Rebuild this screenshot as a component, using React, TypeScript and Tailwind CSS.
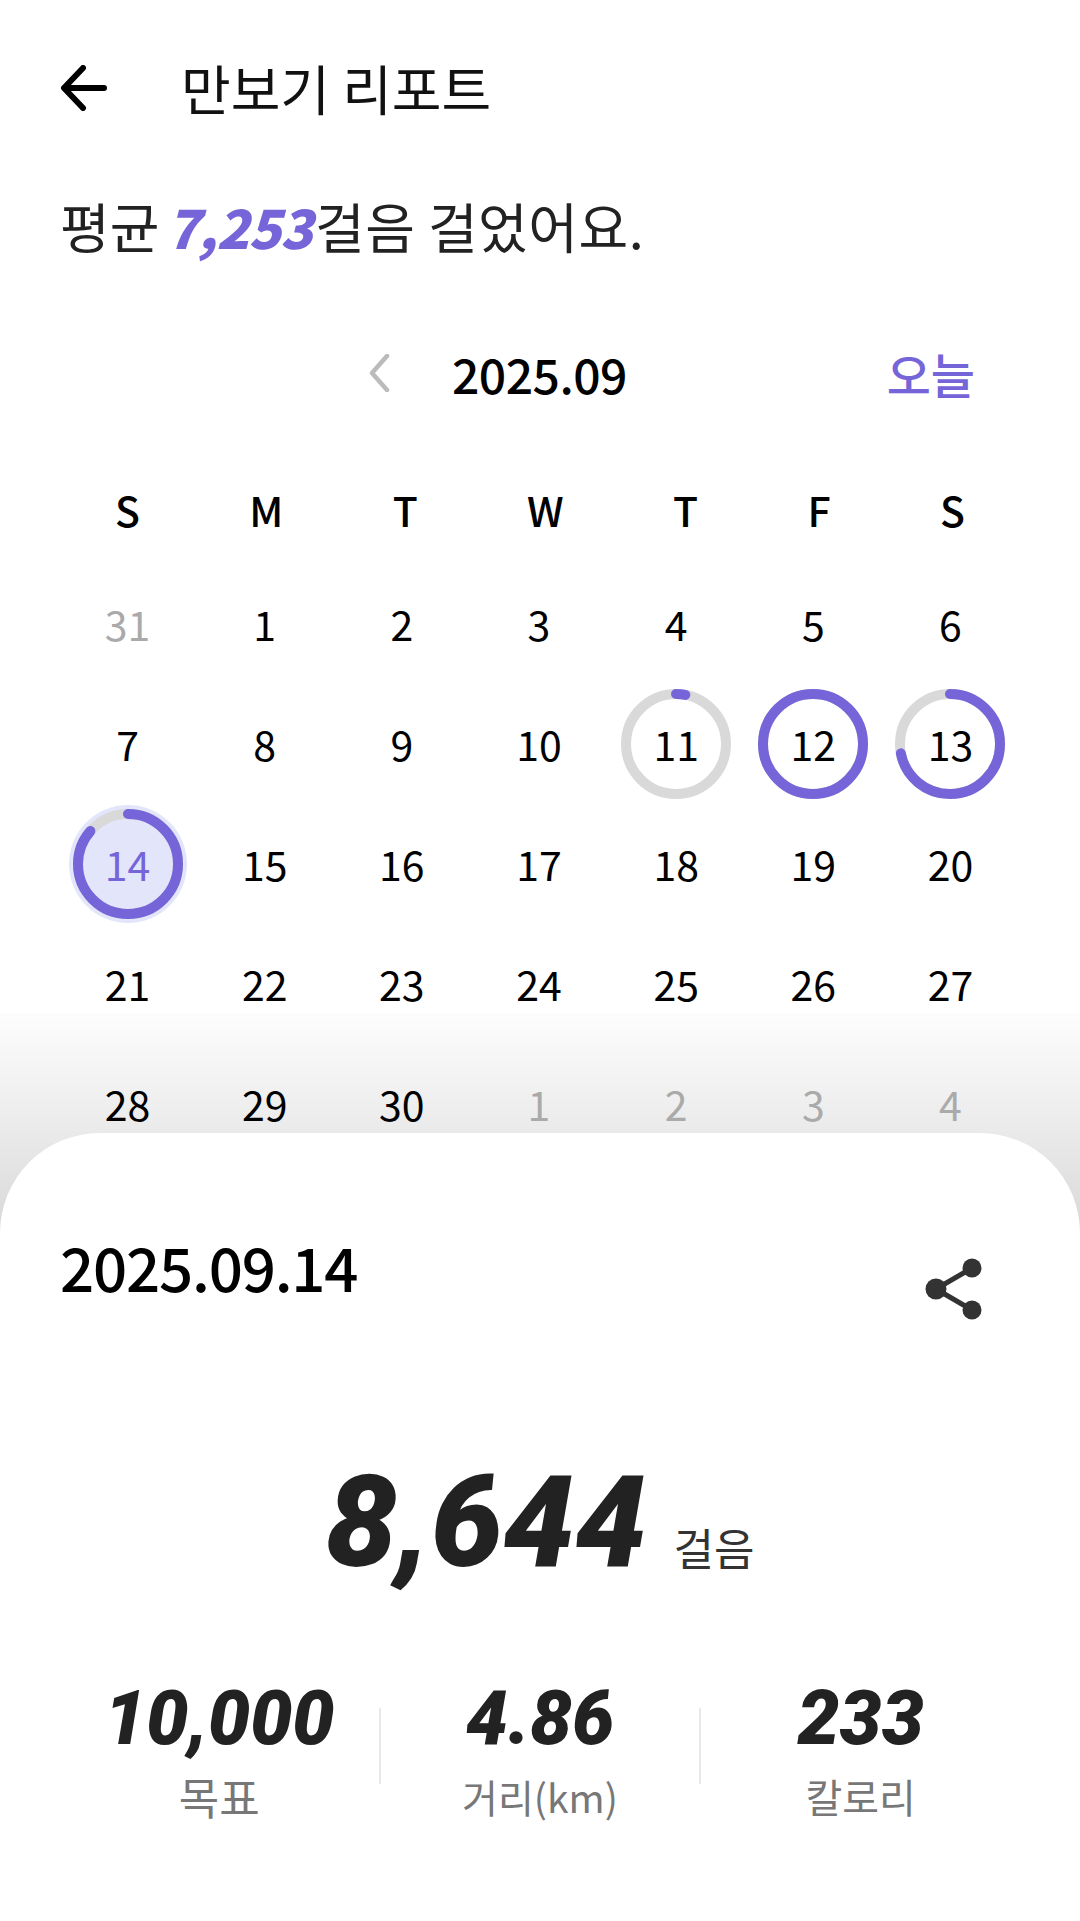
import React from 'react';

const WEEKDAYS = ['S', 'M', 'T', 'W', 'T', 'F', 'S'];

type Day = { label: number; muted?: boolean; progress?: number; selected?: boolean };

const DAYS: Day[] = [
  { label: 31, muted: true },
  ...Array.from({ length: 30 }, (_, i): Day => {
    const label = i + 1;
    if (label === 11) return { label, progress: 3 };
    if (label === 12) return { label, progress: 100 };
    if (label === 13) return { label, progress: 72 };
    if (label === 14) return { label, progress: 86.44, selected: true };
    return { label };
  }),
  { label: 1, muted: true },
  { label: 2, muted: true },
  { label: 3, muted: true },
  { label: 4, muted: true },
];

const STATS = [
  { value: '10,000', label: '목표', labelSize: 'text-[44px]' },
  { value: '4.86', label: '거리(km)', labelSize: 'text-[39px]' },
  { value: '233', label: '칼로리', labelSize: 'text-[40px]' },
];

const Ring = ({ progress, selected }: { progress: number; selected?: boolean }) => (
  <svg
    className="absolute left-1/2 top-1/2 -translate-x-1/2 -translate-y-1/2"
    width="124"
    height="124"
    viewBox="0 0 124 124"
  >
    {selected && <circle cx="62" cy="62" r="59" fill="#e3e6fb" />}
    <circle cx="62" cy="62" r="50" fill="none" stroke="#d9d9d9" strokeWidth="10" />
    <circle
      cx="62"
      cy="62"
      r="50"
      fill="none"
      stroke="#7565d8"
      strokeWidth="10"
      strokeLinecap="round"
      pathLength={100}
      strokeDasharray={`${progress} 100`}
      transform="rotate(-90 62 62)"
    />
  </svg>
);

const DayCell = ({ day }: { day: Day }) => (
  <div className="relative flex h-[120px] items-center justify-center">
    {day.progress !== undefined && <Ring progress={day.progress} selected={day.selected} />}
    <span
      className={`relative text-[41px] ${
        day.selected ? 'text-[#7565d8]' : day.muted ? 'text-[#aaaaaa]' : 'text-black'
      }`}
    >
      {day.label}
    </span>
  </div>
);

export default function App() {
  return (
    <div className="relative h-[1921px] w-[1080px] overflow-hidden bg-white font-['Noto_Sans_CJK_KR',sans-serif]">
      {/* sheet shadow behind the calendar's last row */}
      <div className="absolute left-0 top-[1013px] h-[240px] w-full bg-gradient-to-b from-[#fdfdfd] via-[#ececec] via-45% to-[#d4d4d4]"></div>

      <div className="relative">
        <header className="flex h-[176px] items-center pl-[61px]">
          <svg width="46" height="46" viewBox="0 0 46 46" fill="none" stroke="black" strokeWidth="6" strokeLinecap="round" strokeLinejoin="round">
            <path d="M43 23H4" />
            <path d="M22 3L3 23l19 20" />
          </svg>
          <h1 className="ml-[74px] text-[54px] leading-none text-[#111111]">만보기 리포트</h1>
        </header>

        <p className="flex h-[100px] items-center pl-[60px] text-[54px] leading-none text-[#222222]">
          <span className="whitespace-pre">평균 </span>
          <span className="ml-[-5px] font-black italic tracking-[-1px] text-[#7565d8]">7,253</span>
          <span className="ml-[3px] tracking-[0.5px]">걸음 걸었어요.</span>
        </p>

        <div className="relative mt-[47px] flex h-[100px] items-center pl-[368px]">
          <svg width="22" height="38" viewBox="0 0 22 38" fill="none" stroke="#bbbbbb" strokeWidth="4.5" strokeLinecap="round" strokeLinejoin="round">
            <path d="M19 2L4 19l15 17" />
          </svg>
          <span className="ml-[62px] text-[48px] font-medium leading-none tracking-[-0.5px] text-black">2025.09</span>
          <span className="ml-auto mr-[105px] text-[48px] font-medium leading-none text-[#7565d8]">오늘</span>
        </div>

        <div className="mt-[51px] flex h-[72px] items-center justify-between pl-[115px] pr-[115px] text-[41px] font-medium text-black">
          {WEEKDAYS.map((d, i) => (
            <span key={i}>{d}</span>
          ))}
        </div>

        <div className="mt-[18px] grid grid-cols-7 pl-[59px] pr-[61px]">
          {DAYS.map((day, i) => (
            <DayCell key={i} day={day} />
          ))}
        </div>
      </div>

      <section className="relative mt-[-31px] h-[800px] rounded-t-[100px] bg-white px-[60px]">
        <div className="flex items-start justify-between pt-[91px]">
          <h2 className="text-[60px] font-medium leading-[84px] tracking-[-1.2px] text-black">2025.09.14</h2>
          <svg className="mr-[37px] mt-[34px]" width="58" height="62" viewBox="0 0 58 62" fill="#333333">
            <circle cx="47" cy="10" r="9.5" />
            <circle cx="11" cy="31" r="10.5" />
            <circle cx="47" cy="52" r="9.5" />
            <path d="M11 31L47 10M11 31L47 52" stroke="#333333" strokeWidth="5" fill="none" />
          </svg>
        </div>

        <div className="mt-[127px] flex items-baseline justify-center">
          <span className="font-['Roboto',sans-serif] text-[128px] font-black italic leading-[150px] text-[#222222]">8,644</span>
          <span className="ml-[27px] text-[44px] leading-none text-[#333333]">걸음</span>
        </div>

        <div className="mt-[79px] flex items-center">
          {STATS.map((s, i) => (
            <React.Fragment key={s.label}>
              {i > 0 && <div className="mb-[10px] h-[76px] w-[2px] bg-[#e8e8e8]"></div>}
              <div className="flex flex-1 flex-col items-center">
                <span className="font-['Roboto',sans-serif] text-[75px] font-black italic leading-[84px] text-[#222222]">{s.value}</span>
                <span className={`mt-[6px] leading-[60px] text-[#777777] ${s.labelSize}`}>{s.label}</span>
              </div>
            </React.Fragment>
          ))}
        </div>
      </section>
    </div>
  );
}
